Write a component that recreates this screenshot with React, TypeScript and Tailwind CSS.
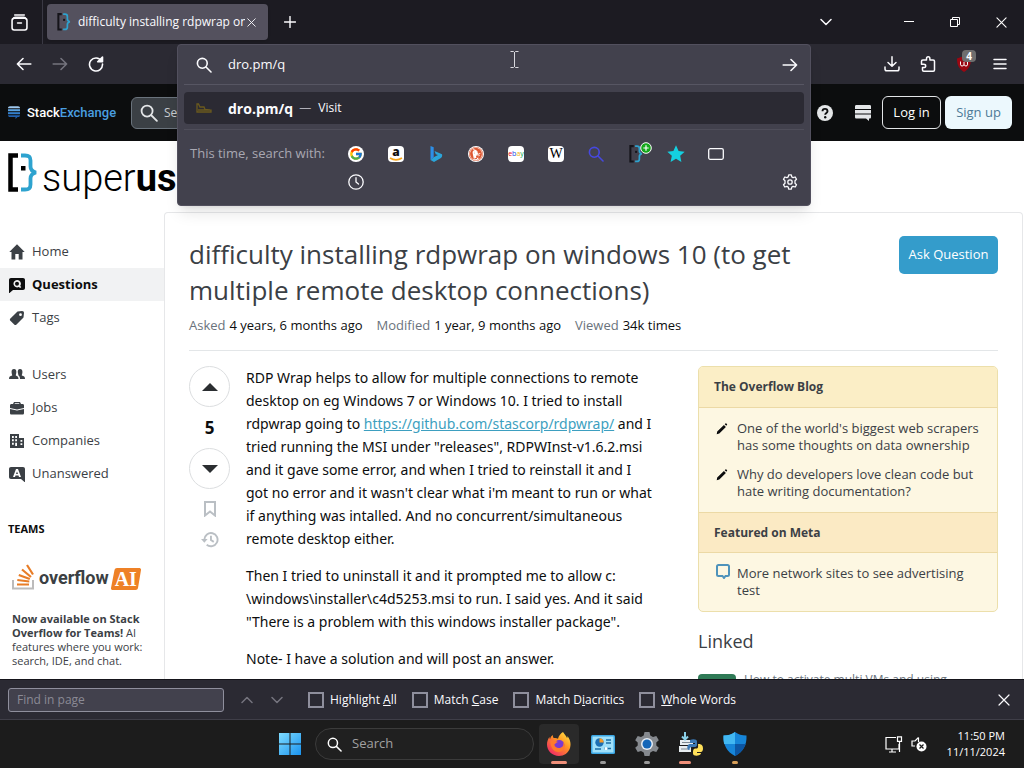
import { useState } from 'react';
import type { ReactNode } from 'react';
import { FcGoogle } from 'react-icons/fc';
import { SiDuckduckgo } from 'react-icons/si';

const line = {
    fill: 'none',
    stroke: 'currentColor',
    strokeLinecap: 'round' as const,
    strokeLinejoin: 'round' as const,
};

function SearchIcon({ className }: { className?: string }) {
    return (
        <svg viewBox="0 0 16 16" className={className} {...line} strokeWidth="1.6">
            <circle cx="6.3" cy="6.3" r="4.9" />
            <path d="M10 10l5 5" />
        </svg>
    );
}

function ArrowIcon({ className }: { className?: string }) {
    return (
        <svg viewBox="0 0 16 16" className={className} {...line} strokeWidth="1.6">
            <path d="M1.2 8h13.4M9 2.5L14.6 8 9 13.5" />
        </svg>
    );
}

function CloseIcon({ className }: { className?: string }) {
    return (
        <svg viewBox="0 0 12 12" className={className} {...line} strokeWidth="1.2">
            <path d="M1 1l10 10M11 1L1 11" />
        </svg>
    );
}

function ChevronIcon({ className }: { className?: string }) {
    return (
        <svg viewBox="0 0 12 12" className={className} {...line} strokeWidth="1.5">
            <path d="M1 3.5l5 5 5-5" />
        </svg>
    );
}

// the [·} mark
function BracketMark({ className, dark = '#000' }: { className?: string; dark?: string }) {
    return (
        <svg viewBox="0 0 30 40" className={className} fill="none">
            <path d="M10 2.500H2.500v34H10" stroke={dark} strokeWidth="4.500" />
            <rect x="13" y="13" width="4.500" height="4.500" fill={dark} />
            <path
                d="M13 2.500h4c4 0 5.500 1.500 5.500 5v6c0 3 1.500 5 5.500 6-4 1-5.500 3-5.500 6v6c0 3.500-1.500 5-5.500 5h-4"
                stroke="#2ea3cf"
                strokeWidth="3.800"
            />
        </svg>
    );
}

function TabBar() {
    return (
        <header className="flex h-11 shrink-0 items-center bg-[#1c1b22] text-[#fbfbfe]">
            <button aria-label="Firefox View" className="flex h-full w-[43px] items-center justify-center border-r border-[#3a3944] pr-1">
                <svg viewBox="0 0 16 16" className="h-[17px] w-[17px]" {...line} strokeWidth="1.5">
                    <path d="M3.500 1h9" />
                    <rect x="1" y="4" width="14" height="11" rx="2" />
                    <path d="M2 4.500c.3-1 1-1.500 2-1.500h8c1 0 1.700.5 2 1.500M6.200 8.500h3.600" />
                </svg>
            </button>
            <div className="ml-1 flex h-9 w-[221px] items-center rounded bg-[#54515e] pl-2.5 pr-3 shadow">
                <BracketMark className="h-[18px] w-3.5 shrink-0" dark="#15141a" />
                <span className="ml-[7px] flex-1 overflow-hidden whitespace-nowrap text-[12px]">difficulty installing rdpwrap on</span>
                <button aria-label="Close tab" className="ml-0.5 shrink-0"><CloseIcon className="h-[9px] w-[9px]" /></button>
            </div>
            <button aria-label="New tab" className="ml-4">
                <svg viewBox="0 0 12 12" className="h-3 w-3" {...line} strokeWidth="1.400"><path d="M6 .5v11M.5 6h11" /></svg>
            </button>
            <div className="ml-auto flex items-center">
                <button aria-label="List all tabs" className="mr-12 flex w-6 justify-center"><ChevronIcon className="h-3 w-3" /></button>
                <button aria-label="Minimize" className="flex h-11 w-[46px] justify-center pt-[21px] text-white">
                    <span className="h-px w-2.5 bg-white" />
                </button>
                <button aria-label="Restore" className="flex h-11 w-[46px] items-center justify-center text-white">
                    <svg viewBox="0 0 10 10" className="h-2.5 w-2.5" fill="none" stroke="currentColor">
                        <path d="M.5 2.500h7v7h-7zM2.500 2.500v-2h7v7h-2" />
                    </svg>
                </button>
                <button aria-label="Close window" className="flex h-11 w-[46px] items-center justify-center text-white">
                    <CloseIcon className="h-[11px] w-[11px]" />
                </button>
            </div>
        </header>
    );
}

function Engine({ name, children }: { name: string; children: ReactNode }) {
    return (
        <button aria-label={name} className="relative flex h-7 w-10 items-center justify-center">
            {children}
        </button>
    );
}

function UrlBar() {
    const [url, setUrl] = useState('dro.pm/q');

    return (
        <div className="absolute inset-x-0 top-0 z-10 h-[162px] rounded border border-[#52505e] bg-[#42414d] px-1.5 text-[#fbfbfe] shadow-lg">
            <div className="flex h-10 items-center border-b border-[#575663] pl-3 pr-1.5">
                <SearchIcon className="h-4 w-4 shrink-0" />
                <input
                    aria-label="Search or enter address"
                    value={url}
                    onChange={(e) => setUrl(e.target.value)}
                    className="ml-4 min-w-0 flex-1 bg-transparent text-[13px] outline-none"
                />
                <button aria-label="Go"><ArrowIcon className="h-4 w-4" /></button>
            </div>
            <a href="#" className="mt-[7px] flex h-8 items-center rounded bg-[#2b2a33] pl-3">
                <svg viewBox="0 0 16 12" className="h-3 w-4" fill="none" stroke="#6b5a1e" strokeWidth="1.300">
                    <path d="M1 2v8h14V8L9 7.500 8 5H4L2.500 2zM2 8h12" />
                </svg>
                <b className="ml-4 text-[14px]">dro.pm/q</b>
                <span className="ml-1.5 text-[12px]"><span className="mr-1 text-[#b0afb8]">—</span> Visit</span>
            </a>
            <div className="mt-[5px] border-t border-[#4f4e5a] pt-2.5">
                <div className="flex items-center pl-1.5">
                    <span className="w-[146px] shrink-0 whitespace-nowrap text-[13px] text-[#a9a8b2]">This time, search with:</span>
                    <Engine name="Google">
                        <span className="flex h-4 w-4 items-center justify-center rounded-full bg-white"><FcGoogle className="h-3.5 w-3.5" /></span>
                    </Engine>
                    <Engine name="Amazon">
                        <span className="relative flex h-4 w-4 justify-center rounded-sm bg-white text-[12px] font-extrabold leading-[11px] text-[#111]">
                            a
                            <svg viewBox="0 0 16 16" className="absolute inset-0 h-4 w-4">
                                <path d="M2 12c4 2.500 8 2.500 12 0" stroke="#f5a31a" strokeWidth="1.600" fill="none" />
                            </svg>
                        </span>
                    </Engine>
                    <Engine name="Bing">
                        <svg viewBox="0 0 16 16" className="h-4 w-4">
                            <path d="M2.500 0l3.200 1.200v10L2.500 14z" fill="#2d8fe8" />
                            <path d="M2.500 14l3.200-2.800L10 9 7.800 8.200 6.500 5l7.500 3.200c.5 1.500 0 3-1.500 4L6 16z" fill="#2ba5da" />
                        </svg>
                    </Engine>
                    <Engine name="DuckDuckGo">
                        <span className="flex h-4 w-4 items-center justify-center rounded-full bg-white"><SiDuckduckgo className="h-3.5 w-3.5 text-[#de5833]" /></span>
                    </Engine>
                    <Engine name="eBay">
                        <span className="flex h-4 w-4 items-center justify-center rounded-sm bg-white text-[7px] leading-4">
                            <span className="text-red-600">e</span><span className="text-blue-700">b</span><span className="text-yellow-500">a</span><span className="text-green-600">y</span>
                        </span>
                    </Engine>
                    <Engine name="Wikipedia">
                        <span className="flex h-4 w-4 items-center justify-center rounded-sm bg-white font-['Liberation_Serif',serif] text-[14px] leading-4 text-black">W</span>
                    </Engine>
                    <Engine name="Search engine"><SearchIcon className="h-4 w-4 text-[#4648e0]" /></Engine>
                    <Engine name="Super User">
                        <BracketMark className="h-[18px] w-3.5" dark="#15141a" />
                        <svg viewBox="0 0 12 12" className="absolute right-1 top-0.5 h-3 w-3">
                            <circle cx="6" cy="6" r="5.300" fill="#16a81c" stroke="#fff" />
                            <path d="M6 3.300v5.400M3.300 6h5.400" stroke="#fff" strokeWidth="1.200" />
                        </svg>
                    </Engine>
                    <Engine name="Bookmarks">
                        <svg viewBox="0 0 16 16" className="h-[18px] w-[18px]" fill="#14d0e0"><path d="M8 .3l2.300 5 5.400.6-4 3.700 1.100 5.400L8 12.300 3.200 15l1.100-5.400-4-3.700 5.400-.6z" /></svg>
                    </Engine>
                    <Engine name="Tabs">
                        <svg viewBox="0 0 16 12" className="h-3 w-4" {...line} strokeWidth="1.300"><rect x=".7" y=".7" width="14.600" height="10.600" rx="1.500" /></svg>
                    </Engine>
                </div>
                <div className="flex items-center justify-between pl-[152px] pr-1.5">
                    <Engine name="History">
                        <svg viewBox="0 0 16 16" className="h-4 w-4" {...line} strokeWidth="1.300"><circle cx="8" cy="8" r="7.200" /><path d="M8 3.700V8l2.500 2" /></svg>
                    </Engine>
                    <button aria-label="Search settings">
                        <svg viewBox="0 0 16 16" className="h-4 w-4" {...line} strokeWidth="1.300">
                            <path d="M6.700.8h2.600l.5 2.100 1.300.8 2.100-.7 1.300 2.300L13 6.800v2.400l1.500 1.500-1.300 2.300-2.100-.7-1.300.8-.5 2.100H6.700l-.5-2.100-1.300-.8-2.100.7-1.300-2.300L3 9.200V6.800L1.500 5.300 2.800 3l2.100.7 1.300-.8z" />
                            <circle cx="8" cy="8" r="2.200" />
                        </svg>
                    </button>
                </div>
            </div>
            {/* text pointer */}
            <svg viewBox="0 0 9 17" className="pointer-events-none absolute left-[332px] top-1.5 h-[17px] w-[9px]" fill="none" stroke="#d8d8de">
                <path d="M.5.500h3l1 1 1-1h3M.5 16.500h3l1-1 1 1h3M4.500 1v15" />
            </svg>
        </div>
    );
}

function NavBar() {
    return (
        <nav className="flex h-10 shrink-0 items-center bg-[#2b2a33] text-[#fbfbfe]">
            <div className="flex w-[177px] shrink-0 items-center gap-5 pl-4">
                <button aria-label="Back"><ArrowIcon className="h-4 w-4 rotate-180" /></button>
                <button aria-label="Forward" disabled className="text-[#75747e]"><ArrowIcon className="h-4 w-4" /></button>
                <button aria-label="Reload">
                    <svg viewBox="0 0 16 16" className="h-4 w-4" {...line} strokeWidth="1.600">
                        <path d="M13.500 5A6.500 6.500 0 1 0 14.500 8" />
                        <path d="M14.500 1v4.800H9.700z" fill="currentColor" />
                    </svg>
                </button>
            </div>
            <div className="relative h-full flex-1"><UrlBar /></div>
            <div className="flex w-[213px] shrink-0 items-center justify-end gap-5 pr-4">
                <button aria-label="Downloads">
                    <svg viewBox="0 0 16 16" className="h-4 w-4" {...line} strokeWidth="1.500"><path d="M8 .8V10M4 6.500L8 10.300l4-3.800M1 11v2c0 1.200.7 1.800 1.800 1.800h10.400c1.100 0 1.800-.6 1.800-1.800v-2" /></svg>
                </button>
                <button aria-label="Extensions">
                    <svg viewBox="0 0 16 16" className="h-4 w-4" {...line} strokeWidth="1.500"><path d="M6.500 4V2.700C6.500 1.500 7.200.8 8.200.8s1.700.7 1.700 1.900V4h3.300c.8 0 1.300.5 1.300 1.200V14c0 .7-.5 1.200-1.300 1.200H3.800c-.8 0-1.300-.5-1.300-1.200v-2.500h1.300c1.200 0 1.900-.6 1.900-1.600s-.7-1.600-1.900-1.600H1.500V5.200C1.500 4.500 2 4 2.800 4z" /></svg>
                </button>
                <button aria-label="uBlock Origin" className="relative">
                    <svg viewBox="0 0 16 16" className="h-4 w-4">
                        <path d="M8 0l7 2.500c0 6-1.500 10-7 13.500C2.500 12.500 1 8.500 1 2.500z" fill="#9b0712" />
                        <path d="M4.500 5.500v3.300c0 1.600 3 1.600 3.500 0 .5 1.600 3.500 1.600 3.500 0V5.500M8 6v3" fill="none" stroke="#fff" />
                    </svg>
                    <span className="absolute -right-1 -top-1.5 h-3 rounded-sm bg-[#6e6e6e] px-1 text-[10px] font-bold leading-3 text-white">4</span>
                </button>
                <button aria-label="Menu">
                    <svg viewBox="0 0 16 16" className="h-4 w-4" {...line} strokeWidth="1.500"><path d="M2 3.500h12M2 8h12M2 12.500h12" /></svg>
                </button>
            </div>
        </nav>
    );
}

function SiteBar() {
    return (
        <div className="flex h-[57px] shrink-0 items-center bg-[#0c0d0e] pr-3 text-[#e4e6e8]">
            <a href="#" className="flex w-[131px] shrink-0 items-center pl-2">
                <svg viewBox="0 0 12 13" className="h-[13px] w-3">
                    <path d="M0 2.200C0 1 .8.300 2 .300h8c1.200 0 2 .7 2 1.900z" fill="#9fc8ee" />
                    <path d="M0 3.200h12v2H0z" fill="#5aa2e0" />
                    <path d="M0 6.200h12v2H0z" fill="#3480cd" />
                    <path d="M0 9.200h12C12 10.500 11 11 10 11H9.500L7.500 13v-2H2c-1.200 0-2-.6-2-1.800z" fill="#2262b0" />
                </svg>
                <span className="ml-[7px] font-[Roboto,sans-serif] text-[13px] font-medium text-white">Stack<span className="text-[#4a9ee0]">Exchange</span></span>
            </a>
            <label className="flex h-8 flex-1 items-center rounded-md border border-[#6a737c] bg-[#3b4045] pl-2">
                <SearchIcon className="h-[18px] w-[18px] shrink-0" />
                <input aria-label="Search" placeholder="Search on Super User…" className="ml-1.5 min-w-0 flex-1 bg-transparent text-[12px] placeholder:text-[#c8ccd0]" />
            </label>
            <div className="ml-7 flex items-center gap-[22px]">
                <button aria-label="Help">
                    <svg viewBox="0 0 16 16" className="h-4 w-4">
                        <circle cx="8" cy="8" r="8" fill="#e4e6e8" />
                        <path d="M5.500 6.300c0-3.200 5-3.200 5 0 0 1.700-2.300 1.700-2.300 3.500" fill="none" stroke="#0c0d0e" strokeWidth="1.900" />
                        <circle cx="8.200" cy="12.200" r="1.200" fill="#0c0d0e" />
                    </svg>
                </button>
                <button aria-label="Site switcher" className="mr-[11px]">
                    <svg viewBox="0 0 16 16" className="h-4 w-4" fill="#e4e6e8">
                        <path d="M1.500 0h13c1 0 1.500.5 1.500 1.500V4H0V1.500C0 .5.5 0 1.500 0zM0 5h16v3.500H0zM0 9.500h16V12c0 1-.5 1.500-1.500 1.500H14V16l-3-2.500H1.500C.5 13.500 0 13 0 12z" />
                    </svg>
                </button>
            </div>
            <button className="h-[33px] w-[59px] rounded-md border border-[#e4e6e8] text-[13px] text-white">Log in</button>
            <button className="ml-1 h-[33px] w-[67px] rounded-md bg-[#ecf8fd] text-[13px] text-[#4d7a97]">Sign up</button>
        </div>
    );
}

const icons: Record<string, ReactNode> = {
    Home: <path d="M8 .3L15.700 8H13.500v7.500H9.700V10H6.300v5.500H2.500V8H.3z" />,
    Questions: <path fillRule="evenodd" d="M2 1h12c1.200 0 2 .8 2 2v8c0 1.200-.8 2-2 2H4l-3.500 3H0V3c0-1.200.8-2 2-2zm6 2a3.700 3.700 0 1 0 1.800 7l1.400 1 1.100-1.100-1.100-1A3.700 3.700 0 0 0 8 3zm0 1.700a2 2 0 1 1 0 4 2 2 0 0 1 0-4z" />,
    Tags: <path fillRule="evenodd" d="M8.500 1.500l4.500-.5c1.500 0 2 .7 2 2L14.500 7.500 7.500 14.500c-.8.700-1.500.7-2.300 0L1.400 10.700c-.7-.8-.7-1.500 0-2.300zM11.500 3.300a1.400 1.400 0 1 0 0 2.800 1.400 1.400 0 0 0 0-2.800z" />,
    Users: <path d="M5 2C7 2 7.500 3.500 7.300 5.500 7.200 7 6.800 7.500 6.800 8.500c1.500.6 2.700 1.200 2.700 3.500H0c0-2.500 1-3 3.200-3.500C3.200 7.500 2.700 7 2.600 5.500 2.400 3.500 3 2 5 2zm6 0c2 0 2.600 1.500 2.400 3.500-.1 1.500-.6 2-.6 3 2.200.5 3.200 1 3.200 3.500h-5c0-1.800-.6-3-1.800-3.700.2-1 .1-1.300-.3-2.300C8.500 3.700 9 2 11 2z" />,
    Jobs: <path fillRule="evenodd" d="M5 2h6l1 2h1.500c1 0 1.500.6 1.500 1.500V8l-7 1.500L1 8V5.500C1 4.600 1.500 4 2.500 4H4zm1 1.200L5.500 4h5L10 3.200zM1 9l7 1.500L15 9v4c0 1-.6 1.500-1.500 1.500h-11C1.600 14.500 1 14 1 13z" />,
    Companies: <path fillRule="evenodd" d="M1 1h9v4h5v10H1zm2 2v2h1.800V3zm3.200 0v2H8V3zM3 6.300v2h1.800v-2zm3.200 0v2H8v-2zM3 9.700v2h1.800v-2zm3.200 0V13H8V9.700zM11.500 7v1.700h1.800V7zm0 3.300V12h1.800v-1.700z" />,
    Unanswered: <path fillRule="evenodd" d="M2 1h12c1.200 0 2 .8 2 2v13h-.5L12 13H2c-1.200 0-2-.8-2-2V3c0-1.200.8-2 2-2zm5 2L4 11h2l.5-1.500h3L10 11h2L9 3zm1 2.500L9 8H7z" />,
};

function SideItem({ label, active }: { label: string; active?: boolean }) {
    return (
        <a
            href="#"
            className={
                'flex h-[33px] items-center gap-[7px] pl-[9px] text-[13px] ' +
                (active ? 'bg-[#f1f2f3] font-bold text-[#0c0d0e]' : 'text-[#3b4045]')
            }
        >
            <svg viewBox="0 0 16 16" className="h-4 w-4" fill="currentColor">{icons[label]}</svg>
            {label}
        </a>
    );
}

function Sidebar() {
    return (
        <aside className="w-[164px] shrink-0 pt-[23px]">
            {['Home', 'Questions', 'Tags'].map((l) => <SideItem key={l} label={l} active={l === 'Questions'} />)}
            <div className="h-6" />
            {['Users', 'Jobs', 'Companies', 'Unanswered'].map((l) => <SideItem key={l} label={l} />)}
            <h2 className="mt-[31px] pl-2 text-[11px] font-bold text-[#0c0d0e]">TEAMS</h2>
            <div className="mt-6 flex items-end pl-3">
                <svg viewBox="0 0 24 28" className="h-7 w-6" fill="none">
                    <path d="M1 18v8.500h20V18" stroke="#bcbbbb" strokeWidth="2" />
                    <path d="M5 22.500h12M5.300 18l12 1.500M6.800 13l11 4M10 7.500l9 7.500M15 3l6 9.500" stroke="#e87d27" strokeWidth="2.200" />
                </svg>
                <span className="ml-[3px] font-[Roboto,sans-serif] text-[18px] font-bold leading-6 text-[#3b3f43]">overflow</span>
                <span className="relative ml-0.5 flex h-[22px] w-[30px] items-center justify-center font-['Liberation_Serif',serif] text-[20px] font-bold text-white">
                    <svg viewBox="0 0 30 22" className="absolute inset-0 h-full w-full"><path d="M6 0h22c1.500 0 2.200 1 2 2l-3 18c-.3 1.300-1 2-2.500 2H2c-1.500 0-2.200-1-2-2L3.500 2C3.800.7 4.700 0 6 0z" fill="#ee8126" /></svg>
                    <span className="relative">AI</span>
                </span>
            </div>
            <p className="mt-[22px] whitespace-nowrap pl-3 text-[11px] leading-[14px] text-[#3b4045]">
                <b>Now available on Stack<br />Overflow for Teams!</b> AI<br />features where you work:<br />search, IDE, and chat.
            </p>
        </aside>
    );
}

function VoteCell() {
    return (
        <div className="flex w-[41px] shrink-0 flex-col items-center">
            <button aria-label="Up vote" className="flex h-[41px] w-[41px] items-center justify-center rounded-full border border-[#dcdee0]">
                <svg viewBox="0 0 16 8" className="h-2 w-4" fill="#2b2e31"><path d="M0 8h16L8 0z" /></svg>
            </button>
            <span className="flex h-[41px] items-center text-[17px] font-bold text-[#0c0d0e]">5</span>
            <button aria-label="Down vote" className="flex h-[41px] w-[41px] items-center justify-center rounded-full border border-[#dcdee0]">
                <svg viewBox="0 0 16 8" className="h-2 w-4" fill="#2b2e31"><path d="M0 0h16L8 8z" /></svg>
            </button>
            <button aria-label="Save" className="mt-3 text-[#babfc4]">
                <svg viewBox="0 0 12 16" className="h-4 w-3" fill="none" stroke="currentColor" strokeWidth="2"><path d="M1 1h10v13.500L6 10.500l-5 4z" /></svg>
            </button>
            <button aria-label="Timeline" className="mt-3.5 text-[#babfc4]">
                <svg viewBox="0 0 19 18" className="h-[17px] w-[18px]" fill="none" stroke="currentColor" strokeWidth="2">
                    <path d="M3.500 9A7 7 0 1 1 6 14.500M10.500 5v4.500l3 2" />
                    <path d="M0 8.500h7l-3.500 4z" fill="currentColor" stroke="none" />
                </svg>
            </button>
        </div>
    );
}

function BlogItem({ meta, children }: { meta?: boolean; children: ReactNode }) {
    return (
        <li className="flex gap-1.5">
            <span className="w-[17px] shrink-0 pl-0.5 pt-[3px]">
                {meta ? (
                    <svg viewBox="0 0 14 15" className="h-[15px] w-3.5 -mt-1" fill="none" stroke="#4f93bb" strokeWidth="2"><path d="M2.500 1h9c1 0 1.500.5 1.500 1.500v8c0 1-.5 1.500-1.500 1.500H9.500L8 14l-1.500-2h-4C1.500 12 1 11.500 1 10.500v-8C1 1.500 1.500 1 2.500 1z" /></svg>
                ) : (
                    <svg viewBox="0 0 12 12" className="h-3 w-3" fill="#0c0d0e"><path d="M1.200 8.500l6.700-6.600 2 2L3.300 10.500.7 11.200zM8.700 1.200l1-.9c.5-.4 1.800.9 1.400 1.500l-.8 1z" /></svg>
                )}
            </span>
            <a href="#" className="whitespace-nowrap">{children}</a>
        </li>
    );
}

function RightColumn() {
    return (
        <div className="w-[300px] shrink-0">
            <section className="overflow-hidden rounded-[5px] border border-[#ecdfab] bg-[#fdf7e2] text-[#3b4045]">
                <h3 className="flex h-10 items-center bg-[#fbeec6] px-[15px] text-[12px] font-bold">The Overflow Blog</h3>
                <ul className="space-y-3 border-y border-[#ecd9a5] px-[15px] pb-3 pt-3 text-[13px] leading-[17px]">
                    <BlogItem>One of the world's biggest web scrapers<br />has some thoughts on data ownership</BlogItem>
                    <BlogItem>Why do developers love clean code but<br />hate writing documentation?</BlogItem>
                </ul>
                <h3 className="flex h-[39px] items-center bg-[#fbeac4] px-[15px] text-[12px] font-bold">Featured on Meta</h3>
                <ul className="border-t border-[#ecd9a5] px-[15px] pb-3 pt-3 text-[13px] leading-[17px]">
                    <BlogItem meta>More network sites to see advertising<br />test</BlogItem>
                </ul>
            </section>
            <h2 className="mt-4 text-[18px] leading-[26px] text-[#3b4045]">Linked</h2>
            <div className="mt-5 flex items-start gap-2 text-[12px] leading-3 text-[#6a737c]">
                <span className="h-6 w-[38px] rounded-sm bg-[#2f7a56]" />
                <a href="#" className="whitespace-nowrap">How to activate multi VMs and using</a>
            </div>
        </div>
    );
}

function Question() {
    return (
        <main className="mr-px min-w-0 flex-1 rounded-t border-x border-t border-[#e6e7e9] px-6 pt-[23px]">
            <div className="flex items-start justify-between">
                <h1 className="whitespace-nowrap text-[26px] leading-9 text-[#3b4045]">
                    difficulty installing rdpwrap on windows 10 (to get<br />multiple remote desktop connections)
                </h1>
                <button className="h-[38px] w-[99px] shrink-0 whitespace-nowrap rounded-[5px] bg-[#349ccb] text-[13px] text-white">Ask Question</button>
            </div>
            <div className="flex gap-3.5 border-b border-[#e3e6e8] pb-4 pt-2 text-[13px] leading-[18px] text-[#0c0d0e]">
                <span><span className="mr-1 text-[#6a737c]">Asked</span>4 years, 6 months ago</span>
                <span><span className="mr-1 text-[#6a737c]">Modified</span>1 year, 9 months ago</span>
                <span><span className="mr-1 text-[#6a737c]">Viewed</span>34k times</span>
            </div>
            <div className="flex pt-[15px]">
                <VoteCell />
                <article className="ml-4 min-w-0 flex-1 space-y-3.5 whitespace-nowrap font-['Noto_Sans',sans-serif] text-[14px] leading-[23px] text-[#0c0d0e]">
                    <p>
                        RDP Wrap helps to allow for multiple connections to remote<br />
                        desktop on eg Windows 7 or Windows 10. I tried to install<br />
                        rdpwrap going to <a href="#" className="text-[#3d9fc0] underline">https://github.com/stascorp/rdpwrap/</a> and I<br />
                        tried running the MSI under "releases", RDPWInst-v1.6.2.msi<br />
                        and it gave some error, and when I tried to reinstall it and I<br />
                        got no error and it wasn't clear what i'm meant to run or what<br />
                        if anything was intalled. And no concurrent/simultaneous<br />
                        remote desktop either.
                    </p>
                    <p>
                        Then I tried to uninstall it and it prompted me to allow c:<br />
                        \windows\installer\c4d5253.msi to run. I said yes. And it said<br />
                        "There is a problem with this windows installer package".
                    </p>
                    <p>Note- I have a solution and will post an answer.</p>
                </article>
                <RightColumn />
            </div>
        </main>
    );
}

function FindOption({ children }: { children: ReactNode }) {
    return (
        <label className="flex items-center gap-1.5">
            <input type="checkbox" className="h-4 w-4 appearance-none border-2 border-[#8f8f9d] checked:bg-[#00ddff]" />
            <span>{children}</span>
        </label>
    );
}

function FindBar() {
    return (
        <div className="flex h-[41px] shrink-0 items-center border-b border-t border-b-[#3f3e48] border-t-[#15141a] bg-[#2b2a33] pl-2 pr-3.5 text-[12px] text-[#fbfbfe]">
            <input
                aria-label="Find in page"
                placeholder="Find in page"
                className="h-6 w-[216px] rounded-[3px] border border-[#8f8f9d] bg-[#42414d] px-2 placeholder:text-[#8b8a95]"
            />
            <button aria-label="Previous" className="ml-[17px] text-[#75747e]"><ChevronIcon className="h-3 w-3 rotate-180" /></button>
            <button aria-label="Next" className="ml-[18px] text-[#75747e]"><ChevronIcon className="h-3 w-3" /></button>
            <div className="ml-[25px] flex items-center gap-[15px]">
                <FindOption>Highlight <u>A</u>ll</FindOption>
                <FindOption>Match <u>C</u>ase</FindOption>
                <FindOption>Match D<u>i</u>acritics</FindOption>
                <FindOption><u>W</u>hole Words</FindOption>
            </div>
            <button aria-label="Close find bar" className="ml-auto"><CloseIcon className="h-3 w-3" /></button>
        </div>
    );
}

function TaskButton({ name, bar, active, children }: { name: string; bar: string; active?: boolean; children: ReactNode }) {
    return (
        <button aria-label={name} className={'flex h-10 w-10 flex-col items-center justify-between rounded pt-2 ' + (active ? 'bg-[#2a2a2a]' : '')}>
            {children}
            <span className={'h-[3px] rounded-full ' + bar} />
        </button>
    );
}

function Taskbar() {
    return (
        <footer className="flex h-12 shrink-0 items-center bg-[#1c1c1c] pl-[278px] pr-[19px] text-white">
            <button aria-label="Start">
                <svg viewBox="0 0 24 24" className="h-6 w-6">
                    <defs>
                        <linearGradient id="win" x1="0" y1="0" x2="1" y2="1" gradientUnits="objectBoundingBox">
                            <stop offset="0" stopColor="#7fdcff" />
                            <stop offset="1" stopColor="#1a93ee" />
                        </linearGradient>
                    </defs>
                    <path d="M1 1h10.500v10.500H1zM12.500 1H23v10.500H12.500zM1 12.500h10.500V23H1zM12.500 12.500H23V23H12.500z" fill="url(#win)" />
                </svg>
            </button>
            <label className="ml-[13px] flex h-8 w-[219px] items-center rounded-full border border-[#3b3b3b] bg-[#202020] pl-[11px]">
                <SearchIcon className="h-[15px] w-[15px] shrink-0" />
                <input aria-label="Search" placeholder="Search" className="ml-2.5 min-w-0 flex-1 bg-transparent text-[13px] placeholder:text-[#a0a0a0]" />
            </label>
            <div className="ml-[5px] flex items-center gap-1">
                <TaskButton name="Firefox" active bar="w-4 bg-[#f0907a]">
                    <svg viewBox="0 0 24 24" className="h-6 w-6">
                        <defs>
                            <linearGradient id="fox" x1="1" y1="0" x2="0.200" y2="1">
                                <stop offset="0" stopColor="#fff04a" />
                                <stop offset=".45" stopColor="#ff9422" />
                                <stop offset="1" stopColor="#f0246a" />
                            </linearGradient>
                        </defs>
                        <path d="M16 0c2 3 3.500 4 4 6 .6-.5.500-1.300.4-2 3 3.500 3.800 8 2.600 12-1.600 5-6 8-11 8C5.500 24 0 19 0 12.500c0-3 1-5.500 2.500-7.500 0 1 .1 1.700.5 2.300C3.500 5 4.500 3.700 6 3c-.3 1.200 0 2.200.8 3 1.700-.3 3 0 4.200.7C11.500 4 13.500 1.500 16 0z" fill="url(#fox)" />
                        <circle cx="12.300" cy="13" r="5" fill="#7a3ad0" />
                        <path d="M3.500 9c3 .2 5-.5 7.500 1-2 .5-2.500 2-4 2.500 1 3 4 4.500 7 3 2-.8 3-3 2-5.500 3.500 4 1 10-4.500 10C6.500 20 3 15 3.500 9z" fill="#ff7a2c" />
                    </svg>
                </TaskButton>
                <TaskButton name="Control Panel" bar="w-1.5 bg-[#9a9a9a]">
                    <svg viewBox="0 0 24 24" className="h-6 w-6">
                        <rect x="0" y="3" width="24" height="19" rx="1.500" fill="#3ba7e4" />
                        <rect x="1.500" y="4.500" width="21" height="16" fill="#9fe0fa" />
                        <circle cx="8.500" cy="10.500" r="4.200" fill="#1c6fb4" />
                        <path d="M8.500 10.500V6.300a4.200 4.200 0 0 1 4.200 4.200z" fill="#f79a27" />
                        <path d="M15 8h5M15 11h5M4 17h6M13 16.500h7" stroke="#1b6da8" strokeWidth="1.500" />
                        <circle cx="15" cy="16.500" r="1.500" fill="#fff" />
                    </svg>
                </TaskButton>
                <TaskButton name="Settings" bar="w-1.5 bg-[#9a9a9a]">
                    <svg viewBox="0 0 24 24" className="h-6 w-6">
                        <path d="M9.500 0h5l.8 3.400 2.700 1.500 3.300-1 2.500 4.300-2.500 2.300v3l2.500 2.300-2.500 4.300-3.300-1-2.700 1.500-.8 3.400h-5l-.8-3.400L6 19.100l-3.300 1L.2 15.800l2.500-2.300v-3L.2 8.200l2.500-4.300 3.300 1 2.700-1.500z" fill="#85898e" />
                        <circle cx="12" cy="12" r="6" fill="#e8eef4" />
                        <circle cx="12" cy="12" r="4.500" fill="#1466b8" />
                    </svg>
                </TaskButton>
                <TaskButton name="Python installer" bar="w-3 self-start ml-2 bg-[#f0907a]">
                    <svg viewBox="0 0 24 24" className="h-6 w-6">
                        <path d="M1 8h13v5H1zM0 14h12v6H0z" fill="#e7edf0" />
                        <path d="M6 0v7M3 4.500l3 3 3-3" stroke="#8bd0e8" strokeWidth="2" fill="none" />
                        <path d="M2 17h8M3 10.500h9" stroke="#7b8790" />
                        <path d="M11 8c3-1.500 7-1 7 1.500v3c0 2-1 2.500-3 2.500h-2c-2 0-2.500 1-2.500 3-3 .5-3-6 .5-6h5v-1h-5z" fill="#3b79b5" />
                        <path d="M19 12c4-.3 5 2 5 4.500 0 3-1.500 3.500-3 3.500h-3v1h4c0 3-8 4-8 .5 0-4 .5-5 3-5 2 0 2.300-1 2-4.500z" fill="#ffe05a" />
                    </svg>
                </TaskButton>
                <TaskButton name="Windows Security" bar="w-1.5 bg-[#d8a05a]">
                    <svg viewBox="0 0 24 24" className="h-6 w-6">
                        <path d="M12 0c3 2.500 7 3.500 11.500 3.500C24 13 20 20 12 24 4 20 0 13 .5 3.500 5 3.500 9 2.500 12 0z" fill="#1685d8" />
                        <path d="M12 0v12H1.200C.5 9.500.4 6.500.5 3.500 5 3.500 9 2.500 12 0z" fill="#42b8f2" />
                        <path d="M12 12v12c5.500-2.700 9.200-7 10.800-12z" fill="#0c56a4" />
                    </svg>
                </TaskButton>
            </div>
            <svg viewBox="0 0 18 17" className="ml-auto h-[17px] w-[18px]" fill="none" stroke="#fff" strokeWidth="1.200">
                <path d="M11 1.500H1v11.500h13V8M7 13v3M4 16h7M12.500.800h4v4.500h-4zM14.500 5.500v10.500" />
            </svg>
            <svg viewBox="0 0 16 16" className="ml-2 h-4 w-4" fill="none" stroke="#fff" strokeWidth="1.200">
                <path d="M7.500 1.500L4 5H1v5h3M7.500 1.500V6" />
                <circle cx="10.500" cy="10.500" r="5" fill="#fff" stroke="none" />
                <path d="M8.500 8.500l4 4M12.500 8.500l-4 4" stroke="#1c1c1c" />
            </svg>
            <div className="ml-5 text-right text-[11px] leading-4">
                <div>11:50 PM</div>
                <div>11/11/2024</div>
            </div>
        </footer>
    );
}

export default function App() {
    return (
        <div className="flex h-screen flex-col overflow-hidden bg-white font-['Open_Sans','Noto_Sans',sans-serif]">
            <TabBar />
            <NavBar />
            <div className="flex min-h-0 flex-1 flex-col overflow-hidden">
                <SiteBar />
                <a href="#" className="flex h-[71px] shrink-0 items-start pl-2 pt-3 text-black">
                    <BracketMark className="h-10 w-[30px]" />
                    <span className="ml-1 font-[Roboto,sans-serif] text-[38px] font-light leading-[50px]">super<b className="font-bold">us</b></span>
                </a>
                <div className="flex min-h-0 flex-1">
                    <Sidebar />
                    <Question />
                </div>
            </div>
            <FindBar />
            <Taskbar />
        </div>
    );
}
